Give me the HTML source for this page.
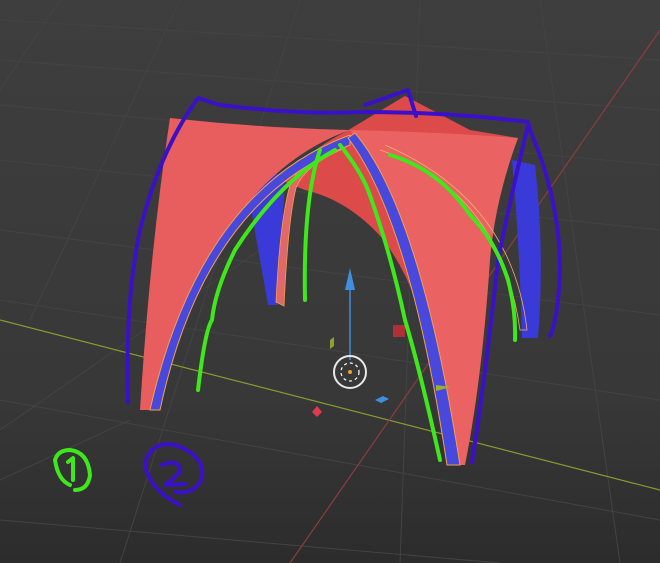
<!DOCTYPE html>
<html><head><style>html,body{margin:0;padding:0;background:#3b3b3b;overflow:hidden}svg{display:block}</style></head><body>
<svg width="660" height="563" viewBox="0 0 660 563" xmlns="http://www.w3.org/2000/svg">
<defs>
<linearGradient id="bg" x1="0" y1="0" x2="0" y2="1"><stop offset="0" stop-color="#3e3e3e"/><stop offset="0.7" stop-color="#383838"/><stop offset="1" stop-color="#2c2c2c"/></linearGradient>
</defs>
<rect width="660" height="563" fill="url(#bg)"/>
<g stroke="#434343" stroke-width="1" fill="none">
<path d="M0 20 L660 60 M0 60 L660 110 M0 105 L660 165 M0 160 L660 230 M0 230 L660 315 M0 300 L660 400 M0 400 L660 520 M0 520 L500 563"/>
<path d="M60 0 L0 90 M180 0 L30 320 M300 0 L120 563 M420 0 L400 563 M540 0 L620 563 M0 430 L260 250 M0 480 L130 420"/>
</g>
<path d="M0 320 L660 490" stroke="#8a9a30" stroke-width="1.2"/>
<path d="M290 563 L660 30" stroke="#8a3d40" stroke-width="1.2"/>
<!-- back red surface -->
<path d="M280 180 Q310 150 345 132 L405 96 L470 130 L518 138 L432 360 Q418 285 382 238 Q348 200 305 190 Z" fill="#dc4a4a"/>
<!-- back blue legs -->
<path d="M245 175 Q262 165 285 178 L278 305 L268 305 Z" fill="#3a3ad8"/>
<path d="M512 160 L535 165 Q545 250 538 338 L522 338 Q520 250 512 160 Z" fill="#3a3ad8"/>
<!-- back-left arch -->
<path d="M342 142 Q300 160 290 185 Q280 220 276 302 L284 306 Q288 220 296 188 Q305 165 345 148 Z" fill="#e06868" stroke="#f0a050" stroke-width="0.8"/>
<!-- left face -->
<path d="M170 118 Q260 128 350 130 Q210 180 155 410 L140 410 Q150 250 170 118 Z" fill="#e85d5d"/>
<!-- right front face -->
<path d="M350 130 Q440 132 518 138 Q495 200 490 260 Q482 380 465 465 L455 465 Q430 250 350 130 Z" fill="#eb6262"/>
<path d="M380 150 Q500 190 520 330 L527 330 Q512 200 385 145" fill="none" stroke="#f0b070" stroke-width="0.8"/>
<!-- front arches -->
<path d="M350 135 Q200 190 150 410 L160 410 Q205 200 350 145 Z" fill="#4848dc" stroke="#f0a050" stroke-width="1"/>
<path d="M348 138 Q410 220 447 465 L460 465 Q420 210 355 133 Z" fill="#4848dc" stroke="#f0a050" stroke-width="1"/>
<!-- gizmo -->
<path d="M350 360 L350 275" stroke="#3f8ee0" stroke-width="1.5"/>
<path d="M345 290 L350 268 L355 290 Z" fill="#3f8ee0"/>
<rect x="393" y="325" width="12" height="12" fill="#b03038"/>
<path d="M330 340 l4 -3 v9 l-4 3z" fill="#90a030"/>
<path d="M375 400 l8 -4 l6 3 l-8 4z" fill="#3f8ee0"/>
<path d="M436 385 l15 2 l-15 4z" fill="#9ab030"/>
<path d="M312 412 l5 -6 l5 6 l-5 5z" fill="#e03a50"/>
<circle cx="350" cy="372" r="16" fill="none" stroke="#e8e8e8" stroke-width="2"/>
<circle cx="350" cy="372" r="9" fill="none" stroke="#fff" stroke-width="1.2" stroke-dasharray="3 3"/>
<circle cx="350" cy="372" r="2" fill="#f0a030"/>
<!-- purple strokes -->
<g stroke="#3a10c8" stroke-width="4" fill="none" stroke-linecap="round" stroke-linejoin="round">
<path d="M128 402 Q125 300 140 230 Q160 150 198 98 L220 105 Q300 115 360 112 Q450 112 528 122 L530 130 Q560 200 560 270 Q558 320 550 336"/>
<path d="M365 105 L408 90 L416 116"/>
<path d="M528 125 Q510 200 498 260 Q485 380 472 462"/>
<path d="M180 505 Q150 490 145 465 Q150 440 175 445 Q205 455 202 478 Q195 495 175 492 M162 465 Q180 458 180 472 Q172 480 165 485 L185 484"/>
</g>
<!-- green strokes -->
<g stroke="#3ee81a" stroke-width="4" fill="none" stroke-linecap="round" stroke-linejoin="round">
<path d="M198 390 Q205 330 212 320 Q215 290 235 250 Q280 180 335 150"/>
<path d="M305 300 Q303 200 320 150"/>
<path d="M340 145 Q360 170 368 190 Q390 250 405 320 Q420 370 440 460"/>
<path d="M390 155 Q440 170 470 215 Q495 240 508 280 Q516 310 515 340"/>
<path d="M70 485 Q58 480 55 460 Q58 450 70 450 Q88 452 90 475 Q88 490 75 490 M68 462 L73 458 L73 480"/>
</g>
</svg>
</body></html>
